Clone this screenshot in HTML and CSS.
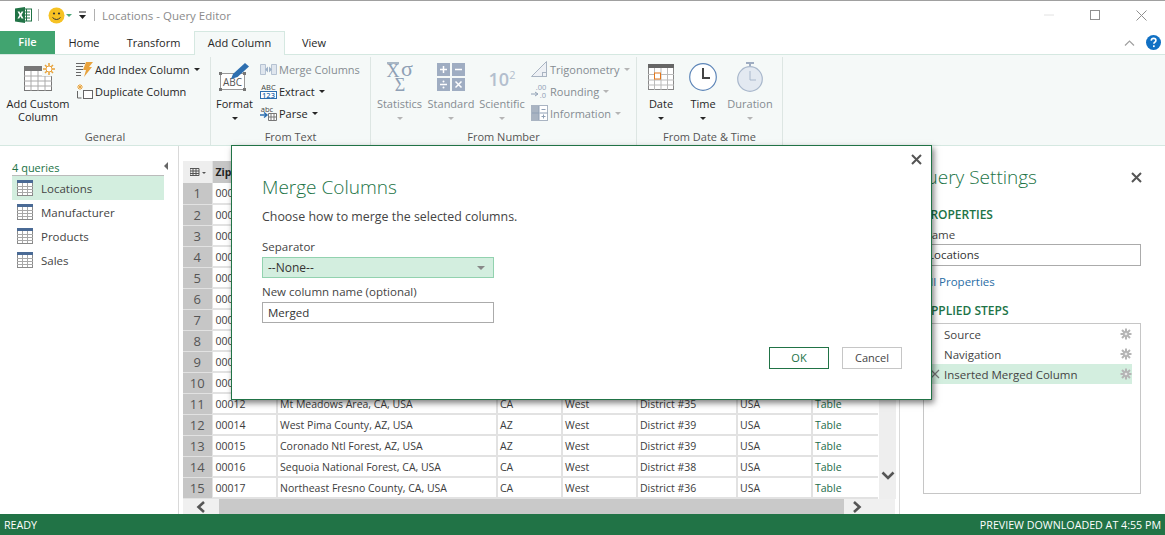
FILE: index.html
```html
<!DOCTYPE html>
<html lang="en">
<head>
    <meta charset="UTF-8">
    <title>Locations - Query Editor</title>
    <link rel="stylesheet" href="styles.css">
</head>
<body>
    <svg class="defs" width="0" height="0">
        <symbol id="tableIcon" viewBox="0 0 16 16">
            <rect x="0.5" y="0.5" width="15" height="15" fill="#fff" stroke="#8a8a8a"/>
            <rect x="0" y="0" width="16" height="3" fill="#4a6a95"/>
            <path d="M5.5 3v12M10.5 3v12M0 6.5h16M0 9.5h16M0 12.5h16" stroke="#a8a8a8" fill="none"/>
        </symbol>
        <symbol id="gearIcon" viewBox="0 0 12 12">
            <path d="M6 0.5v11M0.5 6h11M2 2l8 8M10 2l-8 8" stroke="#b5b5b5" stroke-width="2" fill="none"/>
            <circle cx="6" cy="6" r="3" fill="#b5b5b5"/>
            <circle cx="6" cy="6" r="1.3" fill="#e8e8e8"/>
        </symbol>
    </svg>

    <div class="app">
        <!-- Title bar -->
        <div class="titlebar">
            <svg class="excel-logo" width="17" height="16" viewBox="0 0 17 16">
                <rect x="6" y="2" width="10.5" height="12" fill="#fff" stroke="#217346"/>
                <path d="M8 5h7M8 8h7M8 11h7M11.500 2v12" stroke="#217346"/>
                <path d="M0 1.500 10 0v16L0 14.500z" fill="#217346"/>
                <path d="M2.500 4.500h2l1 2 1.100-2h1.800L6.500 8l2 3.500H6.600L5.400 9.300l-1.200 2.200H2.400L4.500 8z" fill="#fff"/>
            </svg>
            <span class="tb-sep"></span>
            <svg class="smiley" width="17" height="17" viewBox="0 0 17 17">
                <circle cx="8.500" cy="8.500" r="8" fill="#f6c223"/>
                <circle cx="6" cy="6.500" r="1.100" fill="#333"/>
                <circle cx="11" cy="6.500" r="1.100" fill="#333"/>
                <path d="M4.500 10.500q4 4 8 0" stroke="#333" fill="none"/>
            </svg>
            <span class="tri tri-green"></span>
            <svg class="qat-more" width="9" height="8" viewBox="0 0 9 8">
                <path d="M1 1h7" stroke="#222"/>
                <path d="M1 4h7L4.500 8z" fill="#222"/>
            </svg>
            <span class="tb-sep tb-sep-b"></span>
            <span class="title-text">Locations - Query Editor</span>
            <div class="win-controls">
                <svg width="10" height="10" viewBox="0 0 10 10"><path d="M0 5h10" stroke="#e2e2e2"/></svg>
                <svg width="10" height="10" viewBox="0 0 10 10"><rect x="0.500" y="0.500" width="9" height="9" fill="none" stroke="#8f8f8f"/></svg>
                <svg width="11" height="11" viewBox="0 0 11 11"><path d="M0.500 0.500l10 10M10.500 0.500l-10 10" stroke="#8f8f8f"/></svg>
            </div>
        </div>

        <!-- Tabs -->
        <div class="tabs">
            <div class="tab tab-file">File</div>
            <div class="tab tab-home">Home</div>
            <div class="tab tab-transform">Transform</div>
            <div class="tab tab-active">Add Column</div>
            <div class="tab tab-home">View</div>
            <svg class="ribbon-collapse" width="11" height="6" viewBox="0 0 11 6"><path d="M1 5.500l4.500-4.500 4.500 4.500" stroke="#a0a0a0" fill="none" stroke-width="1.200"/></svg>
            <svg class="help" width="15" height="15" viewBox="0 0 15 15">
                <circle cx="7.500" cy="7.500" r="7.500" fill="#1070c4"/>
                <path d="M5.200 5.600q.2-2.200 2.400-2.200 2.300 0 2.300 2 0 1.200-1.200 1.900-.8.500-.8 1.500" stroke="#fff" stroke-width="1.600" fill="none"/>
                <rect x="7" y="10.300" width="1.700" height="1.800" fill="#fff"/>
            </svg>
        </div>

        <!-- Ribbon -->
        <div class="ribbon">
            <div class="group group-general">
                <div class="group-items">
                    <div class="large-btn btn-custom">
                        <svg class="large-icon icon-custom" width="32" height="30" viewBox="0 0 32 30">
                            <rect x="0.500" y="4.500" width="27" height="24" fill="#fff" stroke="#777"/>
                            <rect x="0" y="4" width="28" height="5" fill="#777"/>
                            <path d="M7 9v20M14 9v20M21 9v20M0 14h28M0 19h28M0 24h28" stroke="#aaa"/>
                            <rect x="18" y="0" width="14" height="14" fill="#f4f9f7"/>
                            <path d="M25 1v12M19 7h12M21 3l8 8M29 3l-8 8" stroke="#e8a33d" stroke-width="1.500"/>
                            <circle cx="25" cy="7" r="3" fill="#fff" stroke="#e8a33d"/>
                        </svg>
                        <span class="label">Add Custom<br>Column</span>
                    </div>
                    <div class="small-col">
                        <div class="small-btn">
                            <svg width="17" height="15" viewBox="0 0 17 15">
                                <path d="M0 1.500h9M0 4.500h7M0 7.500h7M0 10.500h5M0 13.500h5" stroke="#666"/>
                                <path d="M10 0h7l-4 5h3l-8 10 2-7H7z" fill="#e8a33d"/>
                            </svg>
                            <span>Add Index Column</span><span class="tri"></span>
                        </div>
                        <div class="small-btn">
                            <svg width="17" height="15" viewBox="0 0 17 15">
                                <path d="M4 0v6M1 3h6M2 1l4 4M6 1L2 5" stroke="#e8a33d"/>
                                <path d="M1.500 7v7h4" stroke="#666" fill="none"/>
                                <rect x="7.500" y="6.500" width="9" height="8" fill="#fff" stroke="#666"/>
                            </svg>
                            <span>Duplicate Column</span>
                        </div>
                    </div>
                </div>
                <div class="group-title">General</div>
            </div>

            <div class="group group-text">
                <div class="group-items">
                    <div class="large-btn btn-format">
                        <svg class="large-icon" width="32" height="30" viewBox="0 0 32 30">
                            <rect x="1.500" y="11.500" width="24" height="16" fill="#fff" stroke="#999"/>
                            <path d="M0 10h3v3H0zM24 10h3v3h-3zM0 26h3v3H0zM24 26h3v3h-3z" fill="#777"/>
                            <text x="13.500" y="24" class="abc-text">ABC</text>
                            <path d="M12 17l2-5L26 1l4 3.500L18.500 15z" fill="#2d6fb0"/>
                        </svg>
                        <span class="label">Format</span>
                        <span class="tri tri-under"></span>
                    </div>
                    <div class="small-col col-text">
                        <div class="small-btn disabled">
                            <svg width="17" height="15" viewBox="0 0 17 15">
                                <path d="M0.500 2.500h5v10h-5zM11.500 2.500h5v10h-5z" fill="#dfe6ee" stroke="#b5c2d2"/>
                                <path d="M5 7.500l3-3v6zM12 7.500l-3-3v6z" fill="#9fb2c8"/>
                            </svg>
                            <span>Merge Columns</span>
                        </div>
                        <div class="small-btn">
                            <svg class="txt-icon" width="17" height="16" viewBox="0 0 17 16">
                                <text x="8.500" y="7" class="tiny-text">ABC</text>
                                <rect x="0.500" y="8.500" width="16" height="7" fill="#fff" stroke="#2d6fb0"/>
                                <text x="8.500" y="14.500" class="tiny-text tiny-blue">123</text>
                            </svg>
                            <span>Extract</span><span class="tri"></span>
                        </div>
                        <div class="small-btn">
                            <svg width="17" height="16" viewBox="0 0 17 16">
                                <text x="7" y="6.500" class="tiny-text">abc</text>
                                <path d="M0 10h6M4 7.500l3 2.500-3 2.500" stroke="#2d6fb0" fill="none" stroke-width="1.500"/>
                                <path d="M8.500 8.500h8v7h-8zM11 8.500v7M14 8.500v7M8.500 12h8" fill="#fff" stroke="#777"/>
                            </svg>
                            <span>Parse</span><span class="tri"></span>
                        </div>
                    </div>
                </div>
                <div class="group-title">From Text</div>
            </div>

            <div class="group group-number">
                <div class="group-items">
                    <div class="large-btn disabled btn-stat">
                        <svg class="large-icon icon-stat" width="30" height="30" viewBox="0 0 30 30">
                            <path d="M2 1h12" stroke="#8fa0b5" stroke-width="1.500"/>
                            <text x="8" y="15" class="stat-text">X</text>
                            <text x="22" y="14" class="stat-text stat-sigma">σ</text>
                            <text x="15" y="29" class="stat-text">Σ</text>
                        </svg>
                        <span class="label">Statistics</span>
                        <span class="tri tri-under tri-grey"></span>
                    </div>
                    <div class="large-btn disabled btn-std">
                        <svg class="large-icon" width="28" height="28" viewBox="0 0 28 28">
                            <rect width="13" height="13" fill="#9fadc2"/><rect x="15" width="13" height="13" fill="#9fadc2"/>
                            <rect y="15" width="13" height="13" fill="#9fadc2"/><rect x="15" y="15" width="13" height="13" fill="#9fadc2"/>
                            <path d="M3 6.500h7M6.500 3v7M18 6.500h7M3 21.500h7M18.500 18.500l6 6M24.500 18.500l-6 6" stroke="#fff" stroke-width="1.500"/>
                            <circle cx="6.500" cy="18.500" r="1" fill="#fff"/><circle cx="6.500" cy="24.500" r="1" fill="#fff"/>
                        </svg>
                        <span class="label">Standard</span>
                        <span class="tri tri-under tri-grey"></span>
                    </div>
                    <div class="large-btn disabled btn-sci">
                        <div class="sci-icon">10<sup>2</sup></div>
                        <span class="label">Scientific</span>
                        <span class="tri tri-under tri-grey"></span>
                    </div>
                    <div class="small-col col-number">
                        <div class="small-btn disabled">
                            <svg width="17" height="16" viewBox="0 0 17 16">
                                <path d="M0.500 15.500L15.500 0.500v15z" fill="#eef1f5" stroke="#a9b4c2"/>
                                <rect x="11.500" y="11.500" width="4" height="4" fill="none" stroke="#a9b4c2"/>
                            </svg>
                            <span>Trigonometry</span><span class="tri tri-grey"></span>
                        </div>
                        <div class="small-btn disabled">
                            <svg width="17" height="16" viewBox="0 0 17 16">
                                <text x="10" y="6.500" class="tiny-text tiny-grey">.00</text>
                                <text x="12" y="15" class="tiny-text tiny-grey">.0</text>
                                <path d="M0 11h6M4 9l3 2-3 2" stroke="#8fa0b5" fill="none"/>
                            </svg>
                            <span>Rounding</span><span class="tri tri-grey"></span>
                        </div>
                        <div class="small-btn disabled">
                            <svg width="17" height="16" viewBox="0 0 17 16">
                                <rect x="0.500" y="0.500" width="16" height="15" fill="#fff" stroke="#a9b4c2"/>
                                <rect x="1" y="1" width="7" height="14" fill="#a9b4c2"/>
                                <path d="M8.500 8h8M8 1v14M1 8h7M10.500 4.500h4M10.500 11.500h4M12.500 9.500v4" stroke="#8fa0b5"/>
                            </svg>
                            <span>Information</span><span class="tri tri-grey"></span>
                        </div>
                    </div>
                </div>
                <div class="group-title">From Number</div>
            </div>

            <div class="group group-date">
                <div class="group-items">
                    <div class="large-btn btn-date">
                        <svg class="large-icon" width="26" height="26" viewBox="0 0 26 26">
                            <rect x="0.500" y="0.500" width="25" height="25" fill="#fff" stroke="#888"/>
                            <rect width="26" height="4" fill="#666"/>
                            <path d="M6.500 4v22M13 4v22M19.500 4v22M0 10.500h26M0 16h26M0 21h26" stroke="#bbb"/>
                            <rect x="6.500" y="9" width="6" height="6" fill="#fff" stroke="#e2761b"/>
                        </svg>
                        <span class="label">Date</span>
                        <span class="tri tri-under"></span>
                    </div>
                    <div class="large-btn btn-time">
                        <svg class="large-icon" width="28" height="28" viewBox="0 0 28 28">
                            <circle cx="14" cy="14" r="13.300" fill="#fff" stroke="#5e86b8" stroke-width="1.200"/>
                            <path d="M14 5v10h7" stroke="#444" stroke-width="2" fill="none"/>
                        </svg>
                        <span class="label">Time</span>
                        <span class="tri tri-under"></span>
                    </div>
                    <div class="large-btn disabled btn-dur">
                        <svg class="large-icon" width="26" height="30" viewBox="0 0 26 30">
                            <path d="M9 1h8M13 1v4" stroke="#9fadc2" stroke-width="2"/>
                            <circle cx="13" cy="17" r="12.300" fill="#e3e9f1" stroke="#a9b8cc" stroke-width="1.200"/>
                            <path d="M13 9v9h6" stroke="#a9b8cc" fill="none"/>
                        </svg>
                        <span class="label">Duration</span>
                        <span class="tri tri-under tri-grey"></span>
                    </div>
                </div>
                <div class="group-title">From Date &amp; Time</div>
            </div>
        </div>

        <!-- Main area -->
        <div class="main">
            <div class="queries">
                <div class="queries-head">
                    <span>4 queries</span>
                    <span class="collapse-arrow"></span>
                </div>
                <div class="query selected"><svg width="16" height="16"><use href="#tableIcon"/></svg>Locations</div>
                <div class="query"><svg width="16" height="16"><use href="#tableIcon"/></svg>Manufacturer</div>
                <div class="query"><svg width="16" height="16"><use href="#tableIcon"/></svg>Products</div>
                <div class="query"><svg width="16" height="16"><use href="#tableIcon"/></svg>Sales</div>
            </div>

            <div class="grid-area">
                <div class="grid-row-wrap">
                    <table class="grid">
                        <colgroup>
                            <col class="c-num"><col class="c-zip"><col class="c-loc"><col class="c-state">
                            <col class="c-region"><col class="c-dist"><col class="c-country"><col class="c-table">
                        </colgroup>
                        <thead>
                            <tr>
                                <th class="corner">
                                    <svg width="12" height="8" viewBox="0 0 12 8"><path d="M0 .5h9v7H0zM3 .5v7M6 .5v7M0 3h9M0 5.500h9" stroke="#555" fill="none"/></svg><span class="corner-tri"></span>
                                </th>
                                <th class="zip">Zip</th><th></th><th></th><th></th><th></th><th></th><th></th>
                            </tr>
                        </thead>
                        <tbody>
                            <!-- rows 1-10 sit behind the dialog, only the start of the zip shows -->
                            <tr><td class="num">1</td><td class="zip">000</td><td></td><td></td><td></td><td></td><td></td><td></td></tr>
                            <tr><td class="num">2</td><td class="zip">000</td><td></td><td></td><td></td><td></td><td></td><td></td></tr>
                            <tr><td class="num">3</td><td class="zip">000</td><td></td><td></td><td></td><td></td><td></td><td></td></tr>
                            <tr><td class="num">4</td><td class="zip">000</td><td></td><td></td><td></td><td></td><td></td><td></td></tr>
                            <tr><td class="num">5</td><td class="zip">000</td><td></td><td></td><td></td><td></td><td></td><td></td></tr>
                            <tr><td class="num">6</td><td class="zip">000</td><td></td><td></td><td></td><td></td><td></td><td></td></tr>
                            <tr><td class="num">7</td><td class="zip">000</td><td></td><td></td><td></td><td></td><td></td><td></td></tr>
                            <tr><td class="num">8</td><td class="zip">000</td><td></td><td></td><td></td><td></td><td></td><td></td></tr>
                            <tr><td class="num">9</td><td class="zip">000</td><td></td><td></td><td></td><td></td><td></td><td></td></tr>
                            <tr><td class="num">10</td><td class="zip">000</td><td></td><td></td><td></td><td></td><td></td><td></td></tr>
                            <tr><td class="num">11</td><td class="zip">00012</td><td>Mt Meadows Area, CA, USA</td><td>CA</td><td>West</td><td>District #35</td><td>USA</td><td class="lnk">Table</td></tr>
                            <tr><td class="num">12</td><td class="zip">00014</td><td>West Pima County, AZ, USA</td><td>AZ</td><td>West</td><td>District #39</td><td>USA</td><td class="lnk">Table</td></tr>
                            <tr><td class="num">13</td><td class="zip">00015</td><td>Coronado Ntl Forest, AZ, USA</td><td>AZ</td><td>West</td><td>District #39</td><td>USA</td><td class="lnk">Table</td></tr>
                            <tr><td class="num">14</td><td class="zip">00016</td><td>Sequoia National Forest, CA, USA</td><td>CA</td><td>West</td><td>District #38</td><td>USA</td><td class="lnk">Table</td></tr>
                            <tr><td class="num">15</td><td class="zip">00017</td><td>Northeast Fresno County, CA, USA</td><td>CA</td><td>West</td><td>District #36</td><td>USA</td><td class="lnk">Table</td></tr>
                        </tbody>
                    </table>
                    <div class="vscroll">
                        <svg width="14" height="9" viewBox="0 0 14 9"><path d="M1.500 1.500L7 7l5.500-5.500" stroke="#555" stroke-width="2.600" fill="none"/></svg>
                    </div>
                </div>
                <div class="hscroll">
                    <div class="hs-btn"><svg width="10" height="12" viewBox="0 0 10 12"><path d="M8 1L2.500 6 8 11" stroke="#555" stroke-width="2.600" fill="none"/></svg></div>
                    <div class="hs-thumb"></div>
                    <div class="hs-btn"><svg width="10" height="12" viewBox="0 0 10 12"><path d="M2 1l5.500 5L2 11" stroke="#555" stroke-width="2.600" fill="none"/></svg></div>
                </div>
            </div>

            <div class="settings">
                <div class="settings-head">
                    <span class="settings-title">Query Settings</span>
                    <svg width="11" height="11" viewBox="0 0 11 11"><path d="M1 1l9 9M10 1l-9 9" stroke="#555" stroke-width="2"/></svg>
                </div>
                <div class="settings-body">
                    <div class="section-title">PROPERTIES</div>
                    <div class="field-label">Name</div>
                    <div class="name-box">Locations</div>
                    <div class="all-props">All Properties</div>
                    <div class="section-title steps-title">APPLIED STEPS</div>
                    <div class="steps">
                        <div class="step"><span class="step-x"></span><span class="step-name">Source</span><svg width="12" height="12"><use href="#gearIcon"/></svg></div>
                        <div class="step"><span class="step-x"></span><span class="step-name">Navigation</span><svg width="12" height="12"><use href="#gearIcon"/></svg></div>
                        <div class="step selected">
                            <svg class="step-x" width="10" height="10" viewBox="0 0 10 10"><path d="M1 1l8 8M9 1L1 9" stroke="#777" stroke-width="1.200"/></svg>
                            <span class="step-name">Inserted Merged Column</span><svg width="12" height="12"><use href="#gearIcon"/></svg>
                        </div>
                    </div>
                </div>
            </div>
        </div>

        <!-- Status bar -->
        <div class="statusbar">
            <span>READY</span>
            <span>PREVIEW DOWNLOADED AT 4:55 PM</span>
        </div>
    </div>

    <!-- Merge dialog -->
    <div class="dialog">
        <div class="dialog-close">
            <svg width="11" height="11" viewBox="0 0 11 11"><path d="M1 1l9 9M10 1l-9 9" stroke="#555" stroke-width="2"/></svg>
        </div>
        <h2 class="dialog-title">Merge Columns</h2>
        <p class="dialog-sub">Choose how to merge the selected columns.</p>
        <div class="dialog-label">Separator</div>
        <div class="select-box">--None--<span class="select-tri"></span></div>
        <div class="dialog-label label-second">New column name (optional)</div>
        <div class="text-box">Merged</div>
        <div class="dialog-btns">
            <div class="btn btn-ok">OK</div>
            <div class="btn">Cancel</div>
        </div>
    </div>
</body>
</html>
```

FILE: styles.css
```css
* {
    box-sizing: border-box;
}
html, body {
    margin: 0;
    padding: 0;
    height: 100%;
    overflow: hidden;
}
body {
    font-family: "Open Sans", "Noto Sans", sans-serif;
    font-size: 11px;
    color: #333;
    background: #fff;
}
.defs {
    display: block;
    height: 0;
}
.app {
    display: flex;
    flex-direction: column;
    height: 535px;
}

/* Title bar */
.titlebar {
    display: flex;
    align-items: center;
    height: 31px;
    flex: none;
    border-top: 1px solid #a0a0a0;
    padding: 0 0 2px 15px;
}
.tb-sep {
    width: 1px;
    height: 12px;
    background: #b0b0b0;
    margin-left: 6px;
}
.smiley {
    margin-left: 9px;
}
.qat-more {
    margin-left: 6px;
}
.tb-sep-b {
    margin-left: 7px;
}
.title-text {
    margin-left: 7px;
    font-size: 11.500px;
    color: #8b8b8b;
}
.win-controls {
    margin-left: auto;
    display: flex;
    align-items: center;
    gap: 36px;
    padding-right: 18px;
}

/* Tabs */
.tabs {
    display: flex;
    height: 24px;
    flex: none;
    border-bottom: 1px solid #d5e8e1;
    align-items: stretch;
}
.tab {
    display: flex;
    align-items: center;
    justify-content: center;
    color: #262626;
    height: 24px;
    padding-bottom: 2px;
}
.tab-file {
    width: 55px;
    background: #41a470;
    color: #fff;
    font-weight: 600;
    height: 23px;
}
.tab-home {
    width: 58px;
}
.tab-transform {
    width: 81px;
}
.tab-active {
    width: 91px;
    background: #f5f9f8;
    border: 1px solid #d5e8e1;
    border-bottom: none;
    margin-bottom: -1px;
}
.ribbon-collapse {
    margin-left: auto;
    align-self: center;
}
.help {
    margin: 0 4px 0 11px;
    align-self: center;
}

/* Ribbon */
.ribbon {
    display: flex;
    height: 91px;
    flex: none;
    background: #f5f9f8;
    border-bottom: 1px solid #d5e8e1;
}
.group {
    display: flex;
    flex-direction: column;
    border-right: 1px solid #dde6e3;
    margin: 2px 0 0;
}
.group-general { width: 211px; }
.group-text { width: 160px; }
.group-number { width: 266px; }
.group-date { width: 146px; }
.group-items {
    display: flex;
    flex: 1;
}
.group-title {
    text-align: center;
    height: 16px;
    color: #555;
    line-height: 16px;
}
.large-btn {
    display: flex;
    flex-direction: column;
    align-items: center;
    text-align: center;
    color: #262626;
    padding-top: 5px;
}
.large-icon {
    height: 30px;
    flex: none;
    display: block;
    margin-bottom: 5px;
}
.icon-custom {
    margin-left: 3px;
}
.icon-stat {
    overflow: visible;
}
.label {
    line-height: 13px;
    white-space: nowrap;
}
.btn-custom { width: 76px; }
.btn-format { width: 47px; }
.btn-stat { width: 57px; }
.btn-std { width: 46px; }
.btn-sci { width: 56px; }
.btn-date { width: 48px; }
.btn-time { width: 36px; }
.btn-dur { width: 58px; }
.abc-text {
    font-size: 10px;
    text-anchor: middle;
    fill: #555;
}
.tiny-text {
    font-size: 7.500px;
    text-anchor: middle;
    fill: #444;
}
.tiny-blue { fill: #2d6fb0; font-weight: 600; }
.tiny-grey { fill: #8fa0b5; }
.stat-text {
    font-family: "Liberation Serif", serif;
    font-size: 18px;
    text-anchor: middle;
    fill: #8fa0b5;
}
.stat-sigma {
    font-size: 22px;
}
.sci-icon {
    height: 30px;
    margin-bottom: 5px;
    font-size: 18px;
    font-weight: 600;
    line-height: 34px;
    color: #b3bfce;
}
.sci-icon sup {
    font-size: 11px;
    font-weight: 400;
    line-height: 0;
}
.small-col {
    display: flex;
    flex-direction: column;
    padding-top: 1px;
}
.col-text {
    margin-left: 2px;
}
.col-number {
    margin-left: 1px;
}
.small-btn {
    display: flex;
    align-items: center;
    height: 22px;
    color: #262626;
    white-space: nowrap;
}
.small-btn svg {
    flex: none;
    margin-right: 2px;
    width: 17px;
}
.disabled,
.disabled .label {
    color: #858c92;
}
.tri {
    display: inline-block;
    width: 0;
    height: 0;
    border-left: 3px solid transparent;
    border-right: 3px solid transparent;
    border-top: 3px solid #262626;
    margin-left: 4px;
}
.tri-grey {
    border-top-color: #b5b5b5;
}
.tri-under {
    margin: 7px 0 0;
}
.tri-green {
    border-top-color: #4ea77a;
    margin-left: 1px;
}

/* Main */
.main {
    display: flex;
    flex: 1;
    min-height: 0;
}
.queries {
    width: 179px;
    flex: none;
    border-right: 1px solid #d9d9d9;
    padding: 14px 14px 0 12px;
}
.queries-head {
    display: flex;
    justify-content: space-between;
    align-items: center;
    height: 16px;
    color: #217346;
    border-bottom: 1px solid #bbb;
}
.collapse-arrow {
    width: 0;
    height: 0;
    border-top: 4px solid transparent;
    border-bottom: 4px solid transparent;
    border-right: 4px solid #666;
    margin: -4px -4px 0 0;
}
.query {
    display: flex;
    align-items: center;
    height: 24px;
    padding-left: 5px;
    gap: 8px;
    font-size: 11.500px;
    color: #444;
}
.query.selected {
    background: #d3eedf;
}
.grid-area {
    width: 721px;
    flex: none;
    padding: 15px 0 0 4px;
    border-right: 1px solid #d9d9d9;
}
.grid-row-wrap {
    display: flex;
}
.grid {
    border-collapse: collapse;
    table-layout: fixed;
    width: 695px;
}
.c-num { width: 29px; }
.c-zip { width: 65px; }
.c-loc { width: 220px; }
.c-state { width: 65px; }
.c-region { width: 75px; }
.c-dist { width: 100px; }
.c-country { width: 75px; }
.c-table { width: 66px; }
.grid th {
    height: 22px;
    background: #c6c6c6;
    font-weight: 700;
    font-size: 10.500px;
    text-align: left;
    padding: 0 2px;
    color: #222;
    border-right: 1px solid #e0e0e0;
}
.grid th.corner {
    background: #eee;
    padding: 0 0 0 7px;
    white-space: nowrap;
}
.corner-tri {
    display: inline-block;
    border-left: 2px solid transparent;
    border-right: 2px solid transparent;
    border-top: 2px solid #555;
    vertical-align: middle;
}
.grid td {
    height: 21px;
    padding: 0 2px;
    white-space: nowrap;
    overflow: hidden;
    border-right: 2px solid #e2e2e2;
    border-bottom: 2px solid #e2e2e2;
    color: #3c3c3c;
    font-size: 10.500px;
}
.grid td.num {
    background: #c6c6c6;
    text-align: center;
    font-size: 13px;
    color: #555;
    border-right: 1px solid #e2e2e2;
    border-bottom: 1px solid #e2e2e2;
    padding: 0;
}
.grid .zip {
    padding-left: 3px;
}
.grid td.lnk {
    color: #1c6b4a;
    border-right: none;
}
.vscroll {
    width: 17px;
    background: #eee;
    display: flex;
    align-items: flex-end;
    justify-content: center;
    padding-bottom: 19px;
}
.hscroll {
    display: flex;
    height: 15px;
    width: 712px;
    background: #f0f0f0;
    align-items: stretch;
}
.hs-btn {
    display: flex;
    align-items: center;
    justify-content: center;
    width: 36px;
    flex: none;
}
.hs-thumb {
    flex: 1;
    background: #c9c9c9;
}
.hs-btn:last-child {
    width: 51px;
    justify-content: flex-start;
    padding-left: 8px;
}

/* Query settings */
.settings {
    flex: 1;
    padding-top: 17px;
}
.settings-head {
    display: flex;
    align-items: center;
    justify-content: space-between;
    padding: 0 23px 0 12px;
    height: 28px;
}
.settings-title {
    font-size: 19px;
    font-weight: 300;
    color: #217346;
}
.settings-body {
    padding: 0 24px 0 23px;
}
.section-title {
    margin-top: 17px;
    font-size: 12px;
    font-weight: 600;
    color: #217346;
    line-height: 14px;
}
.steps-title {
    margin-top: 14px;
}
.field-label {
    margin-top: 6px;
    line-height: 14px;
    font-size: 11.500px;
    color: #444;
}
.name-box {
    margin-top: 2px;
    height: 22px;
    border: 1px solid #ababab;
    line-height: 20px;
    padding-left: 4px;
    font-size: 11.500px;
}
.all-props {
    margin-top: 8px;
    line-height: 16px;
    color: #2a6ea6;
    font-size: 11.500px;
}
.steps {
    margin-top: 5px;
    height: 171px;
    border: 1px solid #c6c6c6;
    padding: 0 8px 0 0;
}
.step {
    display: flex;
    align-items: center;
    height: 20px;
    padding: 0 0 0 6px;
    font-size: 11.500px;
    color: #444;
}
.step.selected {
    background: #d3eedf;
}
.step-x {
    width: 10px;
    flex: none;
    margin-right: 4px;
}
.step-name {
    flex: 1;
}

/* Status bar */
.statusbar {
    display: flex;
    justify-content: space-between;
    align-items: center;
    height: 21px;
    flex: none;
    padding: 0 4px;
    background: #217346;
    color: #fff;
    font-size: 10.700px;
}

/* Merge dialog */
.dialog {
    position: absolute;
    left: 231px;
    top: 145px;
    width: 701px;
    height: 255px;
    background: #fff;
    border: 1px solid #217346;
    box-shadow: 2px 3px 6px rgba(0, 0, 0, 0.5);
    padding: 0 29px 0 30px;
}
.dialog-close {
    display: flex;
    justify-content: flex-end;
    height: 0;
    padding-top: 8px;
    margin-right: -20px;
}
.dialog-title {
    margin: 18px 0 0;
    font-size: 19px;
    font-weight: 300;
    line-height: 30px;
    color: #217346;
}
.dialog-sub {
    margin: 6px 0 0;
    font-size: 12.400px;
    line-height: 17px;
    color: #444;
}
.dialog-label {
    margin-top: 14px;
    font-size: 11.500px;
    line-height: 16px;
    color: #444;
}
.label-second {
    margin-top: 6px;
    line-height: 16px;
}
.select-box {
    display: flex;
    align-items: center;
    justify-content: space-between;
    width: 232px;
    height: 21px;
    margin-top: 2px;
    padding: 0 5px;
    background: #d3eedf;
    border: 1px solid #92d2af;
    font-size: 12px;
}
.select-tri {
    border-left: 4px solid transparent;
    border-right: 4px solid transparent;
    border-top: 4px solid #888;
    margin-right: 3px;
}
.text-box {
    width: 232px;
    height: 21px;
    margin-top: 2px;
    padding: 0 5px;
    border: 1px solid #ababab;
    line-height: 19px;
    font-size: 11.500px;
}
.dialog-btns {
    display: flex;
    justify-content: flex-end;
    gap: 13px;
    margin-top: 24px;
}
.btn {
    width: 60px;
    height: 22px;
    border: 1px solid #c6c6c6;
    text-align: center;
    line-height: 20px;
    color: #444;
}
.btn-ok {
    border-color: #217346;
    color: #217346;
}
```
